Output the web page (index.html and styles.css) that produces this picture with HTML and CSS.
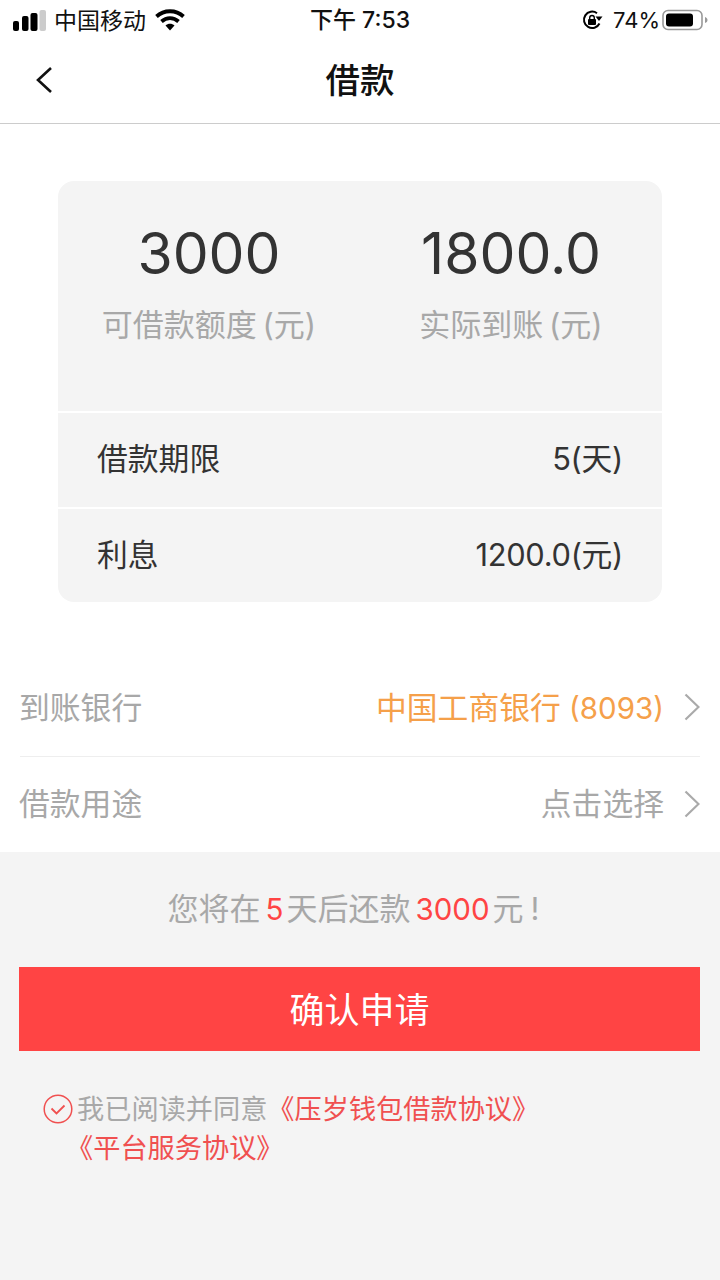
FILE: index.html
```html
<!DOCTYPE html>
<html lang="zh-CN">
<head>
  <meta charset="UTF-8" />
  <meta name="viewport" content="width=device-width, initial-scale=1.0" />
  <title>借款</title>
  <link rel="stylesheet" href="styles.css">
</head>
<body>
  <div class="status-bar">
    <div class="status-left">
      <svg class="signal" width="33" height="21" viewBox="0 0 33 21">
        <rect x="0" y="11" width="6" height="10" rx="2" fill="#000"/>
        <rect x="9" y="6" width="6.500" height="15" rx="2" fill="#000"/>
        <rect x="17.500" y="3" width="7" height="18" rx="2" fill="#000"/>
        <rect x="26.500" y="0" width="6.500" height="21" rx="2" fill="#ccc"/>
      </svg>
      <span class="carrier">中国移动</span>
      <svg class="wifi" width="30" height="22" viewBox="0 0 30 22">
        <path d="M1.500 7.500C9 .5 21 .5 28.500 7.500" fill="none" stroke="#000" stroke-width="3.800"/>
        <path d="M6.500 12.500C11.500 8 18.500 8 23.500 12.500" fill="none" stroke="#000" stroke-width="3.800"/>
        <path d="M10.500 16.500C13 14.200 17 14.200 19.500 16.500L15 21.500Z" fill="#000"/>
      </svg>
    </div>
    <div class="status-time">下午 7:53</div>
    <div class="status-right">
      <svg class="lock" width="21" height="20" viewBox="0 0 21 20">
        <path d="M17.500 13.500A8.200 8.200 0 1 1 15 3.200" fill="none" stroke="#000" stroke-width="2"/>
        <path d="M13.500 6.500L20.500 6.500L17 11Z" fill="#000"/>
        <rect x="6" y="9" width="8" height="6" rx="1" fill="#000"/>
        <path d="M7.700 9V7.800a2.300 2.300 0 0 1 4.600 0V9" fill="none" stroke="#000" stroke-width="1.400"/>
      </svg>
      <span class="battery-pct">74%</span>
      <svg class="battery" width="46" height="22" viewBox="0 0 46 22">
        <rect x="1" y="1.500" width="39" height="19" rx="5" fill="none" stroke="#999" stroke-width="1.600"/>
        <rect x="4" y="4.500" width="27" height="13" rx="3" fill="#000"/>
        <path d="M43 8c1.500.5 2.500 1.500 2.500 3s-1 2.500-2.500 3z" fill="#999"/>
      </svg>
    </div>
  </div>

  <header class="nav-bar">
    <svg class="back" width="18" height="28" viewBox="0 0 18 28">
      <path d="M16 2L3 14l13 12" fill="none" stroke="#111" stroke-width="2.600"/>
    </svg>
    <h1>借款</h1>
  </header>

  <main>
    <section class="card">
      <div class="card-top">
        <div class="stat">
          <div class="stat-num">3000</div>
          <div class="stat-label">可借款额度 (元)</div>
        </div>
        <div class="stat">
          <div class="stat-num">1800.0</div>
          <div class="stat-label">实际到账 (元)</div>
        </div>
      </div>
      <div class="card-row">
        <span>借款期限</span>
        <span class="row-value">5(天)</span>
      </div>
      <div class="card-row">
        <span>利息</span>
        <span class="row-value">1200.0(元)</span>
      </div>
    </section>

    <section class="select-list">
      <div class="select-row">
        <span class="select-name">到账银行</span>
        <span class="select-value bank">中国工商银行<span class="card-no"> (8093)</span></span>
        <svg class="chevron" width="16" height="28" viewBox="0 0 16 28"><path d="M1.500 1.500L14.500 14L1.500 26.500" fill="none" stroke="#aaa" stroke-width="2.200"/></svg>
      </div>
      <div class="select-row">
        <span class="select-name">借款用途</span>
        <span class="select-value">点击选择</span>
        <svg class="chevron" width="16" height="28" viewBox="0 0 16 28"><path d="M1.500 1.500L14.500 14L1.500 26.500" fill="none" stroke="#aaa" stroke-width="2.200"/></svg>
      </div>
    </section>
  </main>

  <footer class="apply">
    <p class="notice">您将在<em>5</em>天后还款<em>3000</em>元<span class="bang">!</span></p>
    <button class="confirm">确认申请</button>
    <div class="agree">
      <svg class="check" width="30" height="30" viewBox="0 0 30 30">
        <circle cx="15" cy="15" r="13.800" fill="none" stroke="#f05050" stroke-width="1.500"/>
        <path d="M8.500 14.500l5 5 8-8" fill="none" stroke="#f05050" stroke-width="1.800"/>
      </svg>
      <p>我已阅读并同意<a>《压岁钱包借款协议》</a><br><a class="second">《平台服务协议》</a></p>
    </div>
  </footer>
</body>
</html>
```

FILE: styles.css
```css
* {
  box-sizing: border-box;
}
html, body {
  margin: 0;
  padding: 0;
}
body {
  width: 720px;
  height: 1280px;
  overflow: hidden;
  display: flex;
  flex-direction: column;
  background: #fff;
  color: #333;
  font-family: Inter, "Noto Sans CJK SC", sans-serif;
}

/* status bar */
.status-bar {
  height: 40px;
  padding: 0 12px 0 13px;
  display: flex;
  align-items: center;
  justify-content: space-between;
  position: relative;
  font-size: 23px;
  color: #111;
}
.status-left, .status-right {
  display: flex;
  align-items: center;
}
.carrier {
  margin: -2px 0 0 8px;
}
.wifi {
  margin-left: 9px;
}
.status-time {
  position: absolute;
  left: 0;
  right: 0;
  top: 0;
  line-height: 41px;
  text-align: center;
  font-weight: 500;
}
.battery-pct {
  margin: 0 2px 0 10px;
  font-size: 22px;
}

/* nav */
.nav-bar {
  height: 84px;
  padding-bottom: 8px;
  border-bottom: 1px solid #ccc;
  display: flex;
  align-items: center;
  justify-content: center;
  position: relative;
}
.nav-bar h1 {
  margin: 0;
  font-size: 34.500px;
  font-weight: 500;
  color: #111;
}
.back {
  position: absolute;
  left: 35px;
  top: 26px;
}

/* card */
main {
  flex: none;
  height: 728px;
  padding-top: 57px;
}
.card {
  width: 604px;
  height: 421px;
  margin: 0 auto;
  background: #f4f4f4;
  border-radius: 16px;
  overflow: hidden;
}
.card-top {
  height: 230px;
  display: grid;
  grid-template-columns: 302px 302px;
  padding-top: 38px;
  text-align: center;
}
.stat-num {
  font-size: 57px;
  line-height: 70px;
  color: #333;
}
.stat-label {
  margin-top: 14px;
  font-size: 31px;
  line-height: 44px;
  word-spacing: -3px;
  color: #a8a8a8;
}
.card-row {
  height: 96px;
  padding: 0 39px 8px 39px;
  border-top: 2px solid #fff;
  display: flex;
  align-items: center;
  justify-content: space-between;
  font-size: 30.800px;
  color: #333;
}
.row-value {
  letter-spacing: -0.300px;
}

/* select rows */
.select-list {
  margin: 58px 20px 0;
}
.select-row {
  height: 96px;
  padding-bottom: 6px;
  display: flex;
  align-items: center;
  font-size: 30.800px;
  color: #a8a8a8;
}
.select-row + .select-row {
  border-top: 1px solid #eee;
}
.select-name {
  flex: 1;
  margin-left: -1px;
}
.bank {
  color: #f5a04a;
}
.card-no {
  font-size: 29.500px;
}
.chevron {
  margin: 4px 0 0 20px;
}

/* bottom */
.apply {
  flex: 1;
  background: #f4f4f4;
  padding: 0 20px 0 19px;
}
.notice {
  margin: 35px 0 0;
  height: 44px;
  line-height: 44px;
  text-align: center;
  font-size: 31px;
  color: #a8a8a8;
}
.notice em {
  font-style: normal;
  font-size: 29.500px;
  margin: 0 3px 0 5px;
  color: #f44;
}
.bang {
  margin-left: 7px;
  padding-right: 12px;
}
.confirm {
  display: block;
  width: 681px;
  height: 84px;
  margin: 36px 0 0;
  padding: 0 0 4px;
  border: none;
  background: #f44;
  color: #fff;
  font-family: inherit;
  font-size: 35px;
}
.agree {
  display: flex;
  margin: 36px 0 0 24px;
}
.check {
  margin-top: 7px;
}
.agree p {
  margin: 4px 0 0 4px;
  font-size: 27.200px;
  line-height: 38.500px;
  color: #a8a8a8;
}
.agree a {
  color: #f05050;
}
.agree .second {
  margin-left: -11px;
}
```
